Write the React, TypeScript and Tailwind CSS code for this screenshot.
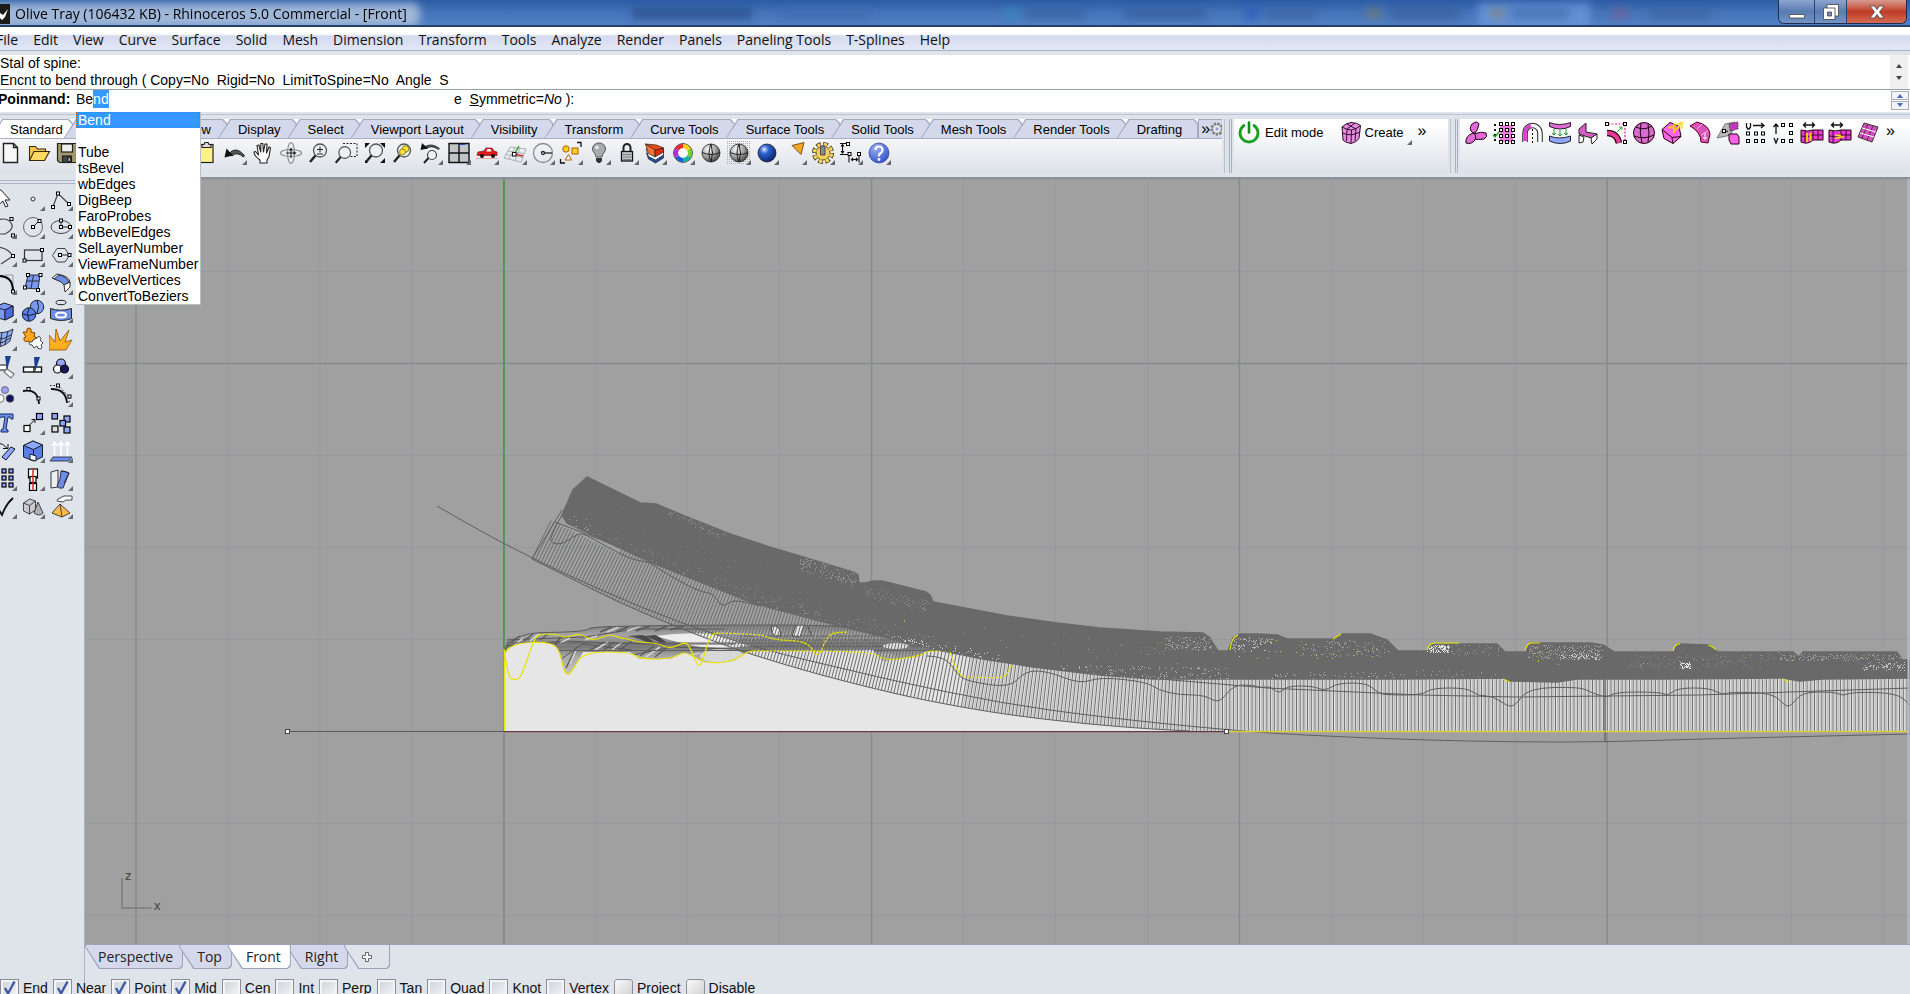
import { useEffect, useRef, useState } from "react";
import type { ReactNode } from "react";
import clsx from "clsx";

const SANS = "font-['Liberation_Sans',Arial,sans-serif]";
const UI = "font-['Open_Sans','Noto_Sans',sans-serif]";

type Tool = { label: string; art: ReactNode; flyout?: boolean };

/* ---------- small drawing helpers ---------- */

const Dot = ({ x, y }: { x: number; y: number }) => (
  <rect x={x - 1.5} y={y - 1.5} width="3" height="3" fill="#fff" stroke="#000" strokeWidth="1" />
);

const Lens = ({ children }: { children?: ReactNode }) => (
  <g fill="none" stroke="#222" strokeWidth="1.3">
    <circle cx="13" cy="9.5" r="6.5" fill="#eef0f3" stroke="#555" />
    <path d="M8.5 14.5L3 21" strokeWidth="2.4" />
    {children}
  </g>
);

const Ball = ({ fill, lines = true }: { fill: string; lines?: boolean }) => (
  <g>
    <circle cx="12" cy="12" r="9" fill={fill} stroke="#222" strokeWidth="0.8" />
    {lines && <path d="M3 11.5q9 4 18 0M12 3q-4 9 0 18M12 3q3 9 0 18" fill="none" stroke="#222" strokeWidth="1" />}
  </g>
);

const Squares = ({ list, fill = "#8fa8ff" }: { list: number[][]; fill?: string }) => (
  <g fill={fill} stroke="#000" strokeWidth="1.2">
    {list.map(([x, y, s], i) => (
      <rect key={i} x={x} y={y} width={s} height={s} />
    ))}
  </g>
);

/* ---------- main toolbar ---------- */

const mainTools: Tool[] = [
  { label: "New", art: <path d="M4.500 2.500h10l4 4v15h-14zM14.500 2.500v4h4" fill="#f8f8f8" stroke="#222" strokeWidth="1.4" /> },
  {
    label: "Open",
    art: (
      <g stroke="#3a2a00" strokeWidth="1.1">
        <path d="M2.500 19.500v-14h6l2 2.500h8v3" fill="#f3c64a" />
        <path d="M2.500 19.500l4.500-9h15.500l-5 9z" fill="#ffd964" />
      </g>
    ),
  },
  {
    label: "Save",
    art: (
      <g stroke="#222" strokeWidth="1.2">
        <path d="M2.500 2.500h19v19h-17l-2-2z" fill="#a29a6a" />
        <rect x="6.500" y="3" width="11" height="8" fill="#eee" />
        <rect x="7.500" y="15" width="9" height="6.500" fill="#444" />
        <rect x="13" y="16.500" width="2.500" height="4" fill="#ddd" />
      </g>
    ),
  },
  { label: "Print", art: <path d="M5 9V3h14v6M3 9h18v8H3zM6 15h12v6H6z" fill="#eee" stroke="#333" /> },
  { label: "Properties", art: <path d="M5 3h14v18H5zM8 8h8M8 12h8M8 16h5" fill="#fff" stroke="#333" /> },
  { label: "Cut", art: <path d="M8 3l6 13M16 3l-6 13M7 16a3 3 0 100 5 3 3 0 000-5M17 16a3 3 0 100 5 3 3 0 000-5" fill="none" stroke="#333" /> },
  { label: "Copy", art: <path d="M4 3h10v13H4zM9 8h11v13H9z" fill="#fff" stroke="#333" /> },
  {
    label: "Paste",
    art: (
      <g stroke="#222" strokeWidth="1.2">
        <rect x="3.500" y="3.500" width="14.500" height="18" fill="#fff08c" />
        <path d="M7 6.500V3.500h2l1-2h3l1 2h2v3z" fill="#ddd" />
      </g>
    ),
  },
  {
    label: "Undo",
    flyout: true,
    art: (
      <g>
        <path d="M6 12.500q7-8 15.500 2l-1 1.500q-7-6-11.500-1z" fill="#555" stroke="#222" />
        <path d="M1.500 16.500l2-9 6.500 7z" fill="#111" />
      </g>
    ),
  },
  {
    label: "Pan",
    art: (
      <path
        d="M9 22v-3q-6-4-6-8l1.500-.5 3 3.500L6 4.500l1.800-.5 2 7V2.500h2L12.500 11l1.500-8h2l-.5 9 2.500-6 1.500.7-1.500 9L16 19v3z"
        fill="#fff"
        stroke="#222"
        strokeWidth="1.1"
        strokeLinejoin="round"
      />
    ),
  },
  {
    label: "Rotate view",
    art: (
      <g fill="none" stroke="#8a8a8a" strokeWidth="1.1">
        <ellipse cx="12" cy="12" rx="10.500" ry="3.500" />
        <ellipse cx="12" cy="12" rx="3.500" ry="10.500" />
        <path d="M12 8v9M7 12h9" stroke="#222" />
        <path d="M10 9.500l2-3 2 3zM14.500 10l3 2-3 2z" fill="#222" stroke="none" />
      </g>
    ),
  },
  { label: "Zoom dynamic", art: <Lens><path d="M10 8.500h6M13 5.500v6M10 13h6" strokeWidth="1" /></Lens> },
  {
    label: "Zoom window",
    art: (
      <g>
        <path d="M8 2.500h14v13H12" fill="none" stroke="#222" strokeDasharray="2 1.500" />
        <g transform="translate(-2 3) scale(0.9)"><Lens /></g>
      </g>
    ),
  },
  {
    label: "Zoom extents",
    art: (
      <g>
        <Lens />
        <path d="M2 7V2h5zM17 2h5v5zM22 17v5h-5zM2 19v3h3z" fill="#111" />
      </g>
    ),
  },
  {
    label: "Zoom selected",
    art: (
      <g>
        <Lens />
        <circle cx="14.500" cy="8" r="3.300" fill="#ffe23a" stroke="#6b5a00" strokeWidth="0.7" />
        <circle cx="11.500" cy="11" r="3" fill="#ffe23a" stroke="#6b5a00" strokeWidth="0.7" />
      </g>
    ),
  },
  {
    label: "Undo view",
    flyout: true,
    art: (
      <g>
        <circle cx="13" cy="14" r="4.500" fill="#eef0f3" stroke="#444" strokeWidth="1.200" />
        <path d="M9.500 17L5 22" stroke="#222" strokeWidth="2" />
        <path d="M5 5.500q8-5 16 2l-1.500 1.500Q13 4 7 8z" fill="#444" />
        <path d="M1.500 9l1.500-7 6 5.500z" fill="#111" />
      </g>
    ),
  },
  {
    label: "Four viewports",
    flyout: true,
    art: (
      <g>
        <path d="M2 2.500h20v19H2zM12 2.500v19M2 12h20" fill="#c2c4c8" stroke="#111" strokeWidth="1.400" />
        <path d="M13 3.500h5" stroke="#2244cc" />
      </g>
    ),
  },
  {
    label: "Named views",
    flyout: true,
    art: (
      <g>
        <path d="M2 14l1-3 6-1 2-3h6l2 3 3 1v3.500H3z" fill="#e01a1a" stroke="#7a0000" strokeWidth="0.600" />
        <path d="M12.500 8h3l1 2.500h-5.500z" fill="#fff" />
        <circle cx="7" cy="15" r="2" fill="#111" />
        <circle cx="18" cy="15" r="2" fill="#111" />
        <path d="M1 17.500h22" stroke="#f2a5a5" />
      </g>
    ),
  },
  {
    label: "Construction plane",
    flyout: true,
    art: (
      <g fill="none" stroke="#a5a8ac" strokeWidth="0.9">
        <path d="M7 6l16 2-5 13L1 17zM12 6.500L6 18M17 7l-5 12.500M5 10l16 2.500M3 13.500l17 3" />
        <path d="M11 13l9 2" stroke="#d22" strokeWidth="1.3" />
        <path d="M12 12l4-7" stroke="#292" strokeWidth="1.3" />
        <rect x="9.500" y="11.500" width="3.500" height="3.500" fill="#fff" stroke="#000" />
      </g>
    ),
  },
  {
    label: "Object snap",
    flyout: true,
    art: (
      <g fill="none" stroke="#8a8d92" strokeWidth="1.300">
        <circle cx="12" cy="12" r="9.500" />
        <path d="M12 12h9" stroke="#222" />
        <circle cx="12" cy="12" r="1.500" fill="#fff" stroke="#222" />
      </g>
    ),
  },
  {
    label: "Select",
    flyout: true,
    art: (
      <g>
        <path d="M18 1.500h4V6M1.500 18v4h4.500" fill="none" stroke="#111" strokeWidth="1.300" />
        <circle cx="7" cy="8" r="3.200" fill="#ffd21f" stroke="#b35c00" />
        <rect x="13" y="7" width="6" height="6" fill="#ffd21f" stroke="#b35c00" />
        <path d="M9.500 13.500l3 5.500H6z" fill="#fff" stroke="#b35c00" />
      </g>
    ),
  },
  {
    label: "Hide",
    flyout: true,
    art: (
      <g>
        <path d="M12 2a6 6 0 00-6.500 6c0 3 3 4 3.500 8h6c.5-4 3.500-5 3.500-8A6 6 0 0012 2z" fill="#a9abb0" stroke="#55585d" />
        <path d="M9 17h6v3l-2 2h-2l-2-2z" fill="#333" />
        <circle cx="10" cy="6.500" r="1.700" fill="#eee" />
      </g>
    ),
  },
  {
    label: "Lock",
    flyout: true,
    art: (
      <g>
        <path d="M8.500 11V6.500a3.500 3.500 0 017 0V11" fill="none" stroke="#222" strokeWidth="2" />
        <rect x="6.500" y="10.500" width="11" height="9.500" fill="#c6c8cc" stroke="#111" strokeWidth="1.300" />
        <path d="M8 13.500h8M8 16h8M8 18.500h8" stroke="#777" />
      </g>
    ),
  },
  {
    label: "Layers",
    flyout: true,
    art: (
      <g stroke="#222" strokeWidth="0.700">
        <path d="M3.500 12l2 6 7 4 8-5v-6z" fill="#27499f" />
        <path d="M3 8l2.500 7.500 7 3.500 8-5V8z" fill="#fff" />
        <path d="M2.500 3l3 9.500 6.500 3.500V8z" fill="#ff7038" />
        <path d="M12 8l8.500-1v4L12 16z" fill="#d92b06" />
        <path d="M2.500 3l11 1 7 3-8.500 2z" fill="#f04a17" />
      </g>
    ),
  },
  {
    label: "Object colour",
    flyout: true,
    art: (
      <g fill="none" strokeWidth="4">
        <circle cx="12" cy="12" r="9.300" fill="#fff" stroke="#222" strokeWidth="1" />
        <path d="M12 5a7 7 0 016 3.500" stroke="#ffd400" />
        <path d="M18 8.500a7 7 0 010 7" stroke="#7bd12a" />
        <path d="M18 15.500A7 7 0 0112 19" stroke="#12b8a0" />
        <path d="M12 19a7 7 0 01-6-3.500" stroke="#1f5be0" />
        <path d="M6 15.500a7 7 0 010-7" stroke="#b52be0" />
        <path d="M6 8.500A7 7 0 0112 5" stroke="#f02a2a" />
      </g>
    ),
  },
  { label: "Shade", art: <Ball fill="url(#ballGray)" /> },
  {
    label: "Render preview",
    flyout: true,
    art: (
      <g>
        <rect x="0" y="0" width="24" height="24" fill="url(#dots)" />
        <Ball fill="url(#ballGray)" />
      </g>
    ),
  },
  { label: "Render", flyout: true, art: <Ball fill="url(#ballBlue)" lines={false} /> },
  {
    label: "Spotlight",
    flyout: true,
    art: <path d="M9 4.500L21 1.500l-3 12z" fill="#f5a623" stroke="#5a3800" strokeWidth="0.800" />,
  },
  {
    label: "Options",
    flyout: true,
    art: (
      <g>
        <circle cx="12" cy="12" r="8.300" fill="none" stroke="#3d3008" strokeWidth="5.500" strokeDasharray="4.300 2.220" />
        <circle cx="12" cy="12" r="8.300" fill="none" stroke="#f3cf63" strokeWidth="4" strokeDasharray="3 3.520" strokeDashoffset="-0.650" />
        <circle cx="12" cy="12" r="7" fill="#f3cf63" stroke="#3d3008" strokeWidth="0.800" />
        <circle cx="12" cy="12" r="8" fill="none" stroke="#f3cf63" strokeWidth="2.500" strokeDasharray="3 3.283" strokeDashoffset="-0.650" />
        <path d="M9.500 5h4.500v9H9.500z" fill="#8c8c8c" stroke="#333" strokeWidth="0.800" />
      </g>
    ),
  },
  {
    label: "Dimension",
    flyout: true,
    art: (
      <g fill="none" stroke="#111" strokeWidth="1.100">
        <path d="M1 2.500h7M3.500 4v7M2 5.500l1.500-2 1.500 2M2 10l1.500 2L5 10M1 13.500h9v8M20 14v7.500M12 18.500h7M14 17l-1.500 1.500L14 20M17 17l1.500 1.500L17 20" />
        <Dot x={9} y={3} />
        <Dot x={10.500} y={13} />
        <Dot x={20} y={13} />
      </g>
    ),
  },
  {
    label: "Help",
    flyout: true,
    art: (
      <g>
        <circle cx="12" cy="12" r="10" fill="url(#ballHelp)" stroke="#2a3f9a" strokeWidth="0.700" />
        <path d="M8.500 9q0-3.500 3.500-3.500T15.500 9q0 2-2 3.200T12 15.500" fill="none" stroke="#fff" strokeWidth="2.200" />
        <circle cx="12" cy="18.500" r="1.400" fill="#fff" />
      </g>
    ),
  },
];

/* ---------- left palette ---------- */

const sideTools: Tool[] = [
  { label: "Pointer", art: <path d="M8 3l9 10h-5l3 6-2.500 1-2.500-6-4 3.500V3z" fill="#fff" stroke="#222" /> },
  { label: "Point", flyout: true, art: <circle cx="12" cy="12" r="2" fill="#fff" stroke="#333" /> },
  {
    label: "Polyline",
    flyout: true,
    art: <g><path d="M4 19.500L9 6.500 20 17" fill="none" stroke="#444" strokeWidth="1.200" /><Dot x={4} y={20} /><Dot x={9} y={6.500} /><Dot x={20} y={17} /></g>,
  },
  {
    label: "Curve",
    flyout: true,
    art: <g><path d="M4 5Q14 2 18 8T12 19H4" fill="none" stroke="#444" strokeWidth="1.200" /><Dot x={18.500} y={4} /><Dot x={20} y={20.500} /></g>,
  },
  {
    label: "Circle",
    flyout: true,
    art: <g><circle cx="12" cy="12" r="9.500" fill="none" stroke="#666" /><path d="M12 12l6-6" stroke="#222" /><Dot x={12} y={12} /><Dot x={18.500} y={6} /></g>,
  },
  {
    label: "Ellipse",
    flyout: true,
    art: <g><ellipse cx="12" cy="12" rx="10" ry="6.500" fill="none" stroke="#444" /><path d="M12 12h9M12 12V6" stroke="#222" /><Dot x={12} y={12} /><Dot x={12} y={5.500} /><Dot x={21} y={12} /></g>,
  },
  {
    label: "Arc",
    flyout: true,
    art: <g><path d="M4 4q11 1 16 9L8 21" fill="none" stroke="#444" strokeWidth="1.200" /><Dot x={20} y={13} /></g>,
  },
  {
    label: "Rectangle",
    flyout: true,
    art: <g><rect x="3.500" y="7" width="17.500" height="10.500" fill="none" stroke="#333" strokeWidth="1.200" /><Dot x={3.500} y={17.500} /><Dot x={21} y={7} /></g>,
  },
  {
    label: "Polygon",
    flyout: true,
    art: <g><path d="M3.500 12.500L8 5.500h8l4.500 7-4.500 6.500H8z" fill="none" stroke="#444" /><path d="M12 12h8" stroke="#222" /><Dot x={11} y={12} /><Dot x={20.500} y={12} /></g>,
  },
  {
    label: "Fillet curves",
    flyout: true,
    art: <g><path d="M12 4h8v8" fill="none" stroke="#999" /><path d="M4 5q16-1 16 15" fill="none" stroke="#000" strokeWidth="2" /><Dot x={20} y={20.500} /></g>,
  },
  {
    label: "Surface from points",
    flyout: true,
    art: <g><path d="M7 4h12l-2 14-13-1z" fill="#7d98f0" stroke="#234" /><path d="M5.500 10h12.500M12.500 4L10 17.500" stroke="#234" /><Dot x={7} y={4} /><Dot x={19.500} y={4} /><Dot x={4} y={16.500} /><Dot x={17} y={19} /></g>,
  },
  {
    label: "Sweep",
    flyout: true,
    art: <g stroke="#333" strokeWidth="1"><path d="M3 7l5-4q13 2 13 9l-4 7q0-8-14-12z" fill="#eee" /><path d="M5 8l5-4q8 2 10 7l-5 3q-2-4-10-6z" fill="#6d8de8" /><path d="M15 14l6-3v5l-5 5z" fill="#fff" /></g>,
  },
  {
    label: "Box",
    flyout: true,
    art: <g stroke="#223" strokeWidth="1"><path d="M2 8l9-4 9 3v10l-8 4-10-3z" fill="#7d98f0" /><path d="M2 8l10 3 8-4M12 11v10" fill="none" /><path d="M12 11l8-4v10l-8 4z" fill="#4a6ae0" /></g>,
  },
  {
    label: "Boolean union",
    flyout: true,
    art: <g stroke="#123" strokeWidth="1"><circle cx="16" cy="8" r="6.700" fill="#7d98f0" /><circle cx="8" cy="15.500" r="6.700" fill="#5b7de8" /><path d="M8 9q-3 6 0 13M2 15q6 3 12 0M16 1.500q3 6 0 13" fill="none" /></g>,
  },
  {
    label: "Project",
    flyout: true,
    art: <g stroke="#222" strokeWidth="1"><ellipse cx="12" cy="3.500" rx="5" ry="2.200" fill="none" /><path d="M1.500 9.500q10 3.500 21 0v10q-10 4-21 0z" fill="#6d8de8" /><ellipse cx="12" cy="16" rx="5" ry="2.500" fill="none" stroke="#fff" strokeWidth="2" /></g>,
  },
  {
    label: "Mesh",
    flyout: true,
    art: <g stroke="#223" strokeWidth="0.900"><path d="M3 5q9 2 17-3l-3 12q-6 6-17 7z" fill="#8fb0f0" /><path d="M3 12q8 1 15-4M3 17q8-1 14-6M9 5L7 20M15 4l-3 14" fill="none" /></g>,
  },
  {
    label: "Plugins",
    art: <g strokeWidth="1"><path d="M2 5h4q-1-4 2-4t2 4l4 1-1 4q4 0 3 3t-4 1l-1 2-4-2q-3 2-4-1t2-3z" fill="#ffa51f" stroke="#7a4700" /><path d="M12 13l4-2q1-3 3-1t0 3l3 3-2 2q2 4-1 4t-3-3l-3 2-2-3q-3 0-3-2t3-1z" fill="#fff" stroke="#444" /></g>,
  },
  { label: "Explode", art: <path d="M0 23V8l6 7 1-13 4 12L20 3l-4 12 7-2-6 10z" fill="#ffae22" stroke="#8a5200" strokeWidth="0.800" /> },
  {
    label: "Trim",
    art: <g stroke="#111" strokeWidth="1.200"><path d="M2 10h12v5H2z" fill="#fff" /><path d="M14 14l7 5-3 4-7-6z" fill="#fff" stroke="#777" /><path d="M12 1h6l-4 14z" fill="#1c3f94" stroke="none" /></g>,
  },
  {
    label: "Split",
    art: <g stroke="#111" strokeWidth="1.400"><rect x="2.500" y="12" width="18" height="5" fill="#fff" /><path d="M13 2h6l-5 15z" fill="#1c3f94" stroke="none" /><path d="M13 12v5" /></g>,
  },
  {
    label: "Join",
    flyout: true,
    art: <g stroke="#111" strokeWidth="1.200"><circle cx="12" cy="8.500" r="4.500" fill="#9aa2ff" /><circle cx="8.500" cy="14" r="4" fill="#fff" /><circle cx="15.500" cy="14" r="4" fill="#15155e" /></g>,
  },
  {
    label: "Group",
    art: <g stroke="#555" strokeWidth="0.800"><circle cx="12" cy="7" r="3.500" fill="#9aa2ff" /><circle cx="7" cy="15.500" r="4" fill="#fff" /><circle cx="17" cy="15.500" r="3.800" fill="#15155e" /></g>,
  },
  {
    label: "Edit points",
    art: <g><path d="M2 8q15-3 16 13" fill="none" stroke="#111" strokeWidth="1.800" /><Dot x={7.500} y={6} /><Dot x={17.500} y={15.500} /></g>,
  },
  {
    label: "Control points",
    flyout: true,
    art: <g><path d="M2 6q15 0 16 14" fill="none" stroke="#111" strokeWidth="1.800" /><path d="M1 2.500h8l11 11v8" fill="none" stroke="#111" strokeDasharray="1.500 2" /><Dot x={9} y={2.500} /><Dot x={20.500} y={13.500} /></g>,
  },
  { label: "Text", art: <path d="M5 3h15v5h-2l-1-2h-2l-2 12 2 1v2H8v-2l2-1 2-12H8L6 8z" fill="#6d8de8" stroke="#112a6a" /> },
  {
    label: "Move",
    flyout: true,
    art: <g><Squares list={[[15.500, 2.500, 6]]} /><Squares list={[[3, 14.500, 6]]} fill="#fff" /><path d="M8.500 14l5-5M14 12V8.500h-3.500" fill="none" stroke="#111" /></g>,
  },
  {
    label: "Copy objects",
    art: <g><Squares list={[[3, 2.500, 5.500], [15, 5, 6], [11, 9.500, 5.500], [15, 16, 6]]} /><Squares list={[[3, 15, 6]]} fill="#ddd" /></g>,
  },
  {
    label: "Rotate",
    art: <g><path d="M9 18l9-10 4 2-9 11z" fill="#8fa8ff" stroke="#112" /><path d="M4 4q6 0 10 5M15 5v4.500h-5" fill="none" stroke="#111" /></g>,
  },
  {
    label: "Solid edit",
    flyout: true,
    art: <g stroke="#122" strokeWidth="1"><path d="M2.500 6.500L12 2l9.500 4v12l-9 4-10-4z" fill="#5b7de8" /><path d="M2.500 6.500l10 4 9-4.500L12 2z" fill="#8fa8ff" /><path d="M12.500 10.500V22" /><path d="M9 15l6 2v5l-6-1.500z" fill="#fff" /></g>,
  },
  {
    label: "Project to plane",
    flyout: true,
    art: <g><path d="M4 18h19l-3 4H1z" fill="#6d8de8" stroke="#223" strokeWidth="0.800" /><path d="M5.500 17V4M12 17V4M18.500 17V4M3 6.500L5.500 3 8 6.500M9.500 6.500L12 3l2.500 3.500M16 6.500L18.500 3 21 6.500" stroke="#fff" strokeWidth="1.500" fill="none" /></g>,
  },
  { label: "Array", flyout: true, art: <Squares list={[[9, 2, 4], [16, 2, 4], [9, 9, 4], [16, 9, 4], [9, 16, 4], [16, 16, 4]]} /> },
  {
    label: "Align",
    flyout: true,
    art: <g><Squares list={[[7.500, 2, 9], [9, 9.500, 6], [8.500, 16.500, 7]]} fill="#fff" /><path d="M12 1v22" stroke="#d22" strokeWidth="1.500" /></g>,
  },
  {
    label: "Bend",
    flyout: true,
    art: <g stroke="#223" strokeWidth="0.900"><path d="M2 5l7-2v17l-7 1z" fill="#eee" /><path d="M12 4q4 0 8 2-3 8-6 15-4 1-6-2 4-7 4-15z" fill="#6d8de8" /><path d="M12 4q4 0 8 2-3 6-5 10" fill="none" /></g>,
  },
  { label: "Check", flyout: true, art: <path d="M6 15l3 5Q13 9 20 3" fill="none" stroke="#111" strokeWidth="1.800" /> },
  {
    label: "Primitives",
    flyout: true,
    art: <g stroke="#333" strokeWidth="0.900"><path d="M2.500 8l6-4 6 2v9l-6 4-6-3z" fill="#c9cbd0" /><path d="M2.500 8l6 2.500 6-4.500M8.500 10.500V19" fill="none" /><path d="M17 7l5 11q-4 4-9 0z" fill="#aeb0b6" /></g>,
  },
  {
    label: "Visibility",
    flyout: true,
    art: <g stroke="#333" strokeWidth="0.900"><path d="M11 9l10 9-8 4-10-4z" fill="#ffb84a" /><path d="M11 9l2 13" /><path d="M9 4l6-3h8v4h-6l-3 2-6-1z" fill="#fff" /></g>,
  },
];

/* ---------- T-Splines toolbar ---------- */

const PINK = "#e26ad6";

const splineTools: Tool[] = [
  {
    label: "Pipe",
    art: <g fill={PINK} stroke="#201" strokeWidth="1"><path d="M9 12q-5-4-1-9 5-4 7 0-1 6-4 9z" /><path d="M10 13q7-3 12-1 2 4-2 6-6 1-10 0z" /><path d="M9 12q4 2 2 7-4 5-9 3-1-7 7-10z" /></g>,
  },
  {
    label: "Control grid",
    art: (
      <g>
        <rect x="8" y="4" width="13" height="17" fill="#f07ae0" />
        <path d="M3 3v18" stroke="#111" strokeDasharray="2 3" strokeWidth="2" />
        <path d="M1 14l2 2 4-5" stroke="#2a2" fill="none" strokeWidth="1.500" />
        {[3, 9, 15, 21].map((y) => [9, 15, 21].map((x) => <Dot key={`${x}-${y}`} x={x} y={y} />))}
      </g>
    ),
  },
  {
    label: "Bridge",
    art: <g fill="none"><path d="M5 21V12a7.500 7.500 0 0115 0v9" stroke="#222" strokeWidth="5.500" /><path d="M5 21V12a7.500 7.500 0 0115 0v9" stroke="#fff" strokeWidth="3.500" /><path d="M5 20V12a7.500 7.500 0 016-7" stroke="#e03ad0" strokeWidth="3.500" /><path d="M12.500 8v14" stroke="#111" strokeDasharray="2 2" /></g>,
  },
  {
    label: "Match",
    art: <g strokeWidth="1"><path d="M1.500 1.500q10 4 21 0v4q-10 5-21 0z" fill={PINK} stroke="#222" /><path d="M1.500 15q10 4 21 0v5q-10 5-21 0z" fill="#8fa8ff" stroke="#222" /><path d="M6 8v6M12 9v6M18 8v6M4 12l2 2 2-2M10 13l2 2 2-2M16 12l2 2 2-2" stroke="#1a9a2a" fill="none" /></g>,
  },
  {
    label: "Crease",
    art: <g stroke="#222" strokeWidth="1"><path d="M3 8l7-6v9l11 2-6 4-12-4z" fill="#d85cc6" /><path d="M15 17l6-4v5l-5 5zM3 14l5 2-1 5-4 1z" fill="#fff" /></g>,
  },
  {
    label: "Insert edge",
    art: <g><path d="M3 12q10 0 12 10" fill="none" stroke="#301" strokeWidth="6.500" /><path d="M3 12q10 0 12 10" fill="none" stroke="#e83a9a" strokeWidth="4" /><path d="M4 3h17v17" fill="none" stroke="#c2a" strokeDasharray="2 1.500" strokeWidth="1.200" /><path d="M13 11l5-5M18 9V6h-3" stroke="#2a2" fill="none" /><Dot x={3} y={3} /><Dot x={21} y={3} /><Dot x={21} y={21} /></g>,
  },
  {
    label: "Smooth",
    art: <g stroke="#201"><circle cx="12" cy="12" r="10.500" fill="#d96bd0" /><path d="M4 6q8 4 16-1M2 15q10 4 20-1M9 2q-2 10 1 20M16 3q2 9 0 18" fill="none" /></g>,
  },
  {
    label: "Box mode",
    art: <g stroke="#201" strokeWidth="1"><path d="M10 1.500l9 4 2 10-8 7-9-5-2-9z" fill="#ff62e6" /><path d="M2 8.500l10 8 9-1M12 16.500l1 6" fill="none" /><path d="M8 7h14V1.500zM14 2v10M21 3l-8 9" fill="none" stroke="#f5d800" strokeWidth="1.200" /></g>,
  },
  {
    label: "Extrude",
    art: <g stroke="#502" strokeWidth="1"><path d="M2 5l7-4q12 3 13 12l-2 9-7-1q0-10-11-16z" fill="#dd52b8" /><path d="M9 8l5-5M13 14l7-4" stroke="#f7b9e6" /><path d="M17 12v6M15 16l2 2.500 2-2.500" stroke="#fff" fill="none" /></g>,
  },
  {
    label: "Append face",
    art: <g><path d="M1 17L9 3l10-2-4 13z" fill="#b9b9bd" stroke="#777" /><path d="M13 3l9-2v7l-8 2z" fill="#c03ab8" stroke="#444" strokeDasharray="1.500 1" /><path d="M13 13h8l2 3v7h-8l-2-4z" fill="#ff62e6" stroke="#201" /><path d="M6 12l6-2" stroke="#111" /><Dot x={8} y={10} /></g>,
  },
  {
    label: "Straighten U",
    art: <g><path d="M2.500 2v4l1.500 2h1l1.500-2V2M9 4.500h11M17 2l3 2.500L17 7" fill="none" stroke="#111" strokeWidth="1.300" /><Dot x={4} y={12.500} /><Dot x={12} y={12.500} /><Dot x={19} y={12.500} /><Dot x={4} y={20} /><Dot x={12} y={20} /><Dot x={19} y={20} /></g>,
  },
  {
    label: "Straighten V",
    art: <g><path d="M4 13V3M1.500 6L4 3l2.500 3M2 17l2 5 2-5" fill="none" stroke="#111" strokeWidth="1.300" /><Dot x={11} y={4} /><Dot x={19} y={4} /><Dot x={19} y={12} /><Dot x={11} y={20} /><Dot x={19} y={20} /></g>,
  },
  ...["Insert loop", "Slide loop"].map((label, i) => ({
    label,
    art: (
      <g>
        <path d="M4 4h10M6 1.500L3.500 4 6 6.500M12 1.500L14.500 4 12 6.500" fill="none" stroke="#111" strokeWidth="1.300" />
        <path d="M1 9q7 2 12 0h10v10H13q-5 5-12 2z" fill="#e83ad0" stroke="#201" />
        <path d="M5 10v12M13 9v10M18 9v10M1 15q7 2 12-1h10" fill="none" stroke="#201" strokeWidth="0.800" />
        {i === 0 ? <path d="M7 12v9M10.500 12v8" stroke="#f5e000" strokeWidth="1.800" /> : <path d="M7 17.500l9-2M7 14.500h6" stroke="#f5e000" strokeWidth="1.500" />}
      </g>
    ),
  })),
  {
    label: "Convert",
    art: <g><path d="M8 2l14 4-6 15L2 16z" fill="#d44fc4" stroke="#433" /><path d="M12 3l-6 14M17 5l-6 14" stroke="#433" /><path d="M6 7l14 4M4 12l14 4" stroke="#fff" /></g>,
  },
];

const Flyout = () => (
  <svg viewBox="0 0 5 5" className="absolute bottom-0.5 right-0.5 size-[5px]" aria-hidden="true">
    <path d="M5 0v5H0z" fill="#666a70" />
  </svg>
);

const ToolButton = ({ tool }: { tool: Tool }) => (
  <button type="button" aria-label={tool.label} className="relative flex size-7 shrink-0 items-center justify-center">
    <svg viewBox="0 0 24 24" className="size-6" aria-hidden="true">
      {tool.art}
    </svg>
    {tool.flyout && <Flyout />}
  </button>
);

/* ---------- title and menu ---------- */

const glassTabs = [
  { x: 632, w: 120, c: "#1f3f78" },
  { x: 780, w: 90, c: "#3c67ad" },
  { x: 1003, w: 16, c: "#2b8fc0" },
  { x: 1025, w: 60, c: "#34609f" },
  { x: 1125, w: 80, c: "#2c5594" },
  { x: 1245, w: 14, c: "#1c4fc0" },
  { x: 1265, w: 50, c: "#35609f" },
  { x: 1367, w: 14, c: "#7d7a63" },
  { x: 1390, w: 70, c: "#31598f" },
  { x: 1490, w: 14, c: "#87865a" },
  { x: 1510, w: 60, c: "#3b66a8" },
  { x: 1612, w: 16, c: "#7d5a8e" },
  { x: 1650, w: 60, c: "#35609f" },
];

const TitleBar = () => (
  <header className="relative flex h-[27px] shrink-0 items-start overflow-hidden border-b-2 border-[#27406b] bg-linear-to-b from-[#2d5ca6] via-[#4573b8] to-[#5280c4]">
    <svg className="absolute inset-0 h-full w-full" aria-hidden="true">
      <defs>
        <filter id="soft" x="-30%" y="-100%" width="160%" height="300%">
          <feGaussianBlur stdDeviation="4" />
        </filter>
      </defs>
      <g filter="url(#soft)">
        <rect x="-20" y="3" width="440" height="24" rx="8" fill="#a9bfdb" opacity="0.9" />
        <rect x="1478" y="3" width="112" height="26" fill="#6d9ade" opacity="0.7" />
        {glassTabs.map((t) => (
          <rect key={t.x} x={t.x} y="8" width={t.w} height="11" fill={t.c} opacity="0.6" />
        ))}
      </g>
    </svg>
    <div className="relative flex flex-1 items-center gap-[5px]">
      <svg viewBox="0 0 10 20" className="h-5 w-2.5" aria-hidden="true">
        <path d="M0 0h10v20H0z" fill="#1b1b1b" />
        <path d="M0 9l3 2 5-6-3 8-3 3-2-2z" fill="#fff" />
      </svg>
      <h1 className={clsx(UI, "text-[14px] leading-[27px] text-black")}>
        Olive Tray (106432 KB) - Rhinoceros 5.0 Commercial - [Front]
      </h1>
    </div>
    <div className="relative mr-[3px] flex h-6 overflow-hidden rounded-b-md border border-t-0 border-[#1c2f52]">
      <button type="button" aria-label="Minimize" className="flex w-9 items-center justify-center border-r border-[#29426f] bg-linear-to-b from-[#8ba6cf] via-[#5a7cb0] to-[#7394c4]">
        <svg viewBox="0 0 20 20" className="size-5"><path d="M2.500 12.500h15v3.500h-15z" fill="#fff" stroke="#444" strokeWidth="0.800" /></svg>
      </button>
      <button type="button" aria-label="Restore" className="flex w-8 items-center justify-center border-r border-[#29426f] bg-linear-to-b from-[#8ba6cf] via-[#5a7cb0] to-[#7394c4]">
        <svg viewBox="0 0 20 20" className="size-5">
          <path d="M6 2.500h11.500v11.500h-3.500v3.500H2.500V6H6z" fill="#fff" stroke="#444" strokeWidth="0.800" />
          <path d="M6.500 10h4v4h-4z" fill="#6d8cbd" stroke="#444" strokeWidth="0.800" />
          <path d="M6 6h8v8" fill="none" stroke="#444" strokeWidth="0.800" />
        </svg>
      </button>
      <button type="button" aria-label="Close" className="flex w-[59px] items-center justify-center bg-linear-to-b from-[#d79a8f] via-[#bf3a24] to-[#d46b52]">
        <svg viewBox="0 0 20 20" className="size-5"><path d="M3 4h4.500L10 7.500 12.500 4H17l-4.500 6 4.500 6h-4.500L10 12.500 7.500 16H3l4.500-6z" fill="#fff" stroke="#444" strokeWidth="0.800" /></svg>
      </button>
    </div>
  </header>
);

const menus = [
  "File", "Edit", "View", "Curve", "Surface", "Solid", "Mesh", "Dimension", "Transform",
  "Tools", "Analyze", "Render", "Panels", "Paneling Tools", "T-Splines", "Help",
];

const MenuBar = () => (
  <nav className={clsx(UI, "flex h-6 shrink-0 gap-[15px] border-b border-[#a9b1c5] bg-linear-to-b from-white from-30% via-[#d5dbee] via-40% to-[#e2e7f6] text-[14px] leading-[26px] text-[#111]")}>
    {menus.map((m) => (
      <button key={m} type="button" className="first:-ml-1">{m}</button>
    ))}
  </nav>
);

/* ---------- command area ---------- */

const suggestions = [
  "Bend", "", "Tube", "tsBevel", "wbEdges", "DigBeep", "FaroProbes", "wbBevelEdges",
  "SelLayerNumber", "ViewFrameNumber", "wbBevelVertices", "ConvertToBeziers",
];

const Arrow = ({ up, blue }: { up?: boolean; blue?: boolean }) => (
  <svg viewBox="0 0 8 5" className="h-[5px] w-2" aria-hidden="true">
    <path d={up ? "M1 5l3-4 3 4z" : "M1 0l3 4 3-4z"} fill={blue ? "#4a66c4" : "#444"} />
  </svg>
);

const CommandArea = () => {
  const prompt = useRef<HTMLInputElement>(null);

  useEffect(() => {
    prompt.current?.focus();
    prompt.current?.setSelectionRange(2, 4);
  }, []);

  return (
    <section className={clsx(SANS, "mt-1 shrink-0 bg-white text-[14px] text-black")}>
      <div className="flex h-[35px] border-b border-[#9aa0a8]">
        <div className="w-[454px] overflow-hidden whitespace-pre leading-[17px]">
          <p>Stal of spine:</p>
          <p>{"Encnt to bend through ( Copy=No  Rigid=No  LimitToSpine=No  Angle  S"}</p>
        </div>
        <div className="ml-auto mr-0.5 flex w-[18px] flex-col items-center justify-around bg-[#f0f0f0] py-1">
          <button type="button" aria-label="Scroll up"><Arrow up /></button>
          <button type="button" aria-label="Scroll down"><Arrow /></button>
        </div>
      </div>
      <div className="relative flex h-[22px] items-start leading-[18px]">
        <label htmlFor="command" className="-ml-0.5 w-[78px] font-bold">Poinmand:</label>
        <input
          id="command"
          ref={prompt}
          defaultValue="Bend"
          className="h-[18px] w-[378px] bg-transparent caret-transparent outline-none selection:bg-[#3399ff] selection:text-white"
        />
        <p className="whitespace-pre">e  <u>S</u>ymmetric=<i>No</i> ):</p>
        <div className="ml-auto mr-px flex flex-col gap-px pt-px">
          <button type="button" aria-label="Previous command" className="flex h-[9px] w-[18px] items-center justify-center border border-[#a8adb8] bg-[#f2f3f6]"><Arrow up blue /></button>
          <button type="button" aria-label="Next command" className="flex h-[9px] w-[18px] items-center justify-center border border-[#a8adb8] bg-[#f2f3f6]"><Arrow blue /></button>
        </div>
        <ul role="listbox" aria-label="Matching commands" className="absolute left-[76px] top-[22px] z-20 w-[125px] border-b border-r border-[#b9bdc6] bg-white leading-4">
          {suggestions.map((s, i) => (
            <li
              key={i}
              role="option"
              aria-selected={i === 0}
              className={clsx("h-4 pl-0.5", i === 0 && "outline-dotted -outline-offset-1 outline-1 outline-[#c46a1c] bg-[#3399ff] text-white")}
            >
              {s}
            </li>
          ))}
        </ul>
      </div>
    </section>
  );
};

/* ---------- toolbars ---------- */

const toolTabs = [
  "Standard", "CPlanes", "Set View", "Display", "Select", "Viewport Layout", "Visibility", "Transform",
  "Curve Tools", "Surface Tools", "Solid Tools", "Mesh Tools", "Render Tools", "Drafting",
];

const tabShape = "[clip-path:polygon(12px_0,calc(100%-4px)_0,100%_4px,100%_100%,0_100%)]";

const ToolTabs = ({ active, onPick }: { active: string; onPick: (t: string) => void }) => (
  <div className={clsx(SANS, "flex h-5 border-b border-[#a9afc0] text-[13px] leading-[21px] text-black")}>
    {toolTabs.map((t) => (
      <button
        key={t}
        type="button"
        onClick={() => onPick(t)}
        className={clsx(tabShape, "relative -ml-[9px] shrink-0 bg-[#a3abc2] pl-[20px] pr-4 first:-ml-[10px] first:pr-2.5")}
      >
        <span className={clsx(tabShape, "absolute inset-x-px bottom-0 top-px", t === active ? "bg-white" : "bg-[#d3d9ea]")} />
        <span className="relative">{t}</span>
      </button>
    ))}
    <div className="flex flex-1 items-center justify-between border-l border-t border-[#a3abc2] bg-[#d3d9ea] pl-0.5">
      <button type="button" aria-label="More tabs" className="text-[16px] leading-4">»</button>
      <button type="button" aria-label="Tab options">
        <svg viewBox="0 0 16 16" className="size-[14px]" aria-hidden="true">
          <circle cx="8" cy="8" r="6" fill="#dcdee2" stroke="#777" strokeWidth="3" strokeDasharray="2.500 1.500" />
          <circle cx="8" cy="8" r="5" fill="#e3e4e8" stroke="#888" />
          <circle cx="8" cy="8" r="1.700" fill="#8fa0d0" />
        </svg>
      </button>
    </div>
  </div>
);

const panel = "bg-linear-to-b from-white from-10% to-[#dde1e8]";

const Grip = () => (
  <div className="ml-0.5 mr-0.5 flex gap-px border-l border-[#b9bfcc] pl-1">
    <i className="w-px bg-[#aab1c4]" />
    <i className="w-px bg-[#aab1c4]" />
  </div>
);

const Toolbars = () => {
  const [tab, setTab] = useState("Standard");

  return (
    <section className="flex h-[54px] shrink-0">
      <div className={clsx(panel, "w-[1222px] shrink-0 overflow-hidden")}>
        <ToolTabs active={tab} onPick={setTab} />
        <div className="-ml-[3px] flex">
          {mainTools.map((t) => <ToolButton key={t.label} tool={t} />)}
        </div>
      </div>
      <Grip />
      <div className={clsx(panel, SANS, "flex w-[214px] shrink-0 items-start text-[13px] leading-7")}>
        <button type="button" className="flex items-center gap-1 pl-[3px] pr-[15px]">
          <svg viewBox="0 0 24 24" className="size-6" aria-hidden="true">
            <path d="M7 4.500a9 9 0 1010 0" fill="none" stroke="#17a022" strokeWidth="2.800" strokeLinecap="round" />
            <path d="M12 1.500v10" stroke="#138a1c" strokeWidth="2.600" strokeLinecap="round" />
          </svg>
          Edit mode
        </button>
        <button type="button" className="relative flex items-center gap-0.5 pr-2.5">
          <svg viewBox="0 0 24 24" className="size-6" aria-hidden="true">
            <path d="M3 6q4-4 9-4.500 6 0 9.500 3l-1.500 13q-3 4-8 5-6-1-8-3.500z" fill="#e58be0" stroke="#301030" />
            <path d="M3 6q5 3 9.500 3 5-1 9-4.500M12.500 9L12 22M8 3l8 4.500M16 2L8 8l-.5 12M3.500 12q8 4 17.500-1M17 7l-1 13" fill="none" stroke="#301030" />
          </svg>
          Create
          <Flyout />
        </button>
        <button type="button" aria-label="More" className="pl-1 text-[16px] leading-6">»</button>
      </div>
      <Grip />
      <div className={clsx(panel, SANS, "flex flex-1 items-start pl-0.5")}>
        {splineTools.map((t) => <ToolButton key={t.label} tool={t} />)}
        <button type="button" aria-label="More" className="pl-1 text-[16px] leading-6">»</button>
      </div>
    </section>
  );
};

const Palette = () => (
  <aside className="w-[85px] shrink-0 overflow-hidden border-r border-[#aab2c6] pt-[3px]">
    <div className="mb-px h-1 w-[75px] border-y border-[#aab2c6]" />
    <div className="-ml-[9px] grid w-[84px] grid-cols-3">
      {sideTools.map((t) => <ToolButton key={t.label} tool={t} />)}
    </div>
  </aside>
);

/* ---------- viewport geometry ---------- */

type P = [number, number];

const gridX = Array.from({ length: 40 }, (_, i) => 136 + i * 91.95);
const gridY = Array.from({ length: 12 }, (_, i) => 179.500 + i * 92);

const bandTop: P[] = [
  [562, 515], [573, 490], [587, 477], [640, 503], [656, 504], [687, 517], [730, 534], [773, 548], [803, 557],
  [853, 572], [858, 575], [859, 583], [865, 583], [873, 581], [882, 581], [926, 592], [930, 595], [933, 602], [970, 609],
  [1007, 616], [1057, 623], [1100, 628], [1160, 632], [1203, 633], [1209, 637], [1218, 651], [1228, 651],
  [1233, 638], [1240, 634], [1257, 634], [1277, 635], [1287, 639], [1333, 639], [1342, 634], [1370, 634],
  [1387, 640], [1398, 651], [1427, 651], [1432, 644], [1497, 644], [1505, 652], [1525, 652], [1530, 643],
  [1590, 643], [1603, 645], [1614, 652], [1673, 652], [1677, 644], [1710, 645], [1718, 652], [1780, 652],
  [1793, 652], [1799, 657], [1803, 652], [1897, 652], [1902, 660], [1910, 660],
];

const bandBottom: P[] = [
  [1910, 678], [1822, 679], [1800, 681], [1783, 678], [1667, 679], [1577, 679], [1557, 682], [1510, 681],
  [1503, 678], [1400, 679], [1200, 679], [1153, 679], [1100, 675], [1033, 667], [983, 659], [933, 649],
  [880, 636], [820, 621], [753, 603], [703, 583], [653, 563], [607, 542], [567, 523],
];

const base: P[] = [
  [532, 559], [570, 578], [620, 603], [670, 624], [710, 640], [753, 655], [820, 675], [900, 695], [960, 707],
  [1017, 716], [1087, 724], [1150, 729], [1190, 731], [1910, 731],
];

const spine: P[] = [
  [437, 506], [480, 531], [532, 558], [600, 590], [680, 623], [760, 649], [853, 671], [900, 682], [1000, 703],
  [1100, 717], [1227, 730], [1300, 735], [1420, 740], [1517, 742], [1605, 742], [1700, 739], [1910, 734],
];

const slabTop: P[] = [
  [505, 653], [508, 648], [520, 643], [543, 642], [555, 645], [560, 653], [564, 671], [568, 675], [573, 670],
  [583, 652], [630, 652], [640, 659], [670, 659], [682, 653], [687, 653], [703, 662], [717, 663], [733, 661],
  [747, 652], [753, 651], [873, 650], [883, 661], [920, 656], [927, 651], [940, 651],
];

const yellowBack: P[] = [
  [504, 649], [508, 676], [513, 680], [520, 679], [526, 663], [535, 637], [542, 634], [557, 634], [564, 638],
  [577, 634], [583, 635], [593, 641], [610, 634], [620, 638], [628, 639], [637, 642], [657, 643], [670, 649],
  [685, 642], [690, 647], [698, 667], [702, 663], [710, 635], [717, 633],
];

const yellowDashed: P[] = [
  [717, 633], [762, 634], [773, 640], [808, 641], [818, 660], [828, 633], [847, 632],
];

const yellowDip: P[] = [[950, 652], [958, 675], [967, 677], [1000, 678], [1007, 675], [1012, 664]];

const texture: P[] = [
  [504, 652], [509, 633], [583, 632], [592, 627], [633, 626], [713, 625], [850, 625], [930, 640], [940, 651],
];

const contour: P[] = [
  [927, 656], [945, 656], [958, 675], [967, 681], [1010, 688], [1025, 671], [1047, 671], [1080, 684], [1100, 677],
  [1147, 682], [1158, 690], [1180, 695], [1205, 695], [1219, 704], [1233, 685], [1253, 685], [1262, 688],
  [1270, 686], [1279, 694], [1287, 686], [1313, 686], [1325, 691], [1338, 683], [1367, 683], [1378, 693],
  [1387, 695], [1422, 695], [1432, 688], [1468, 688], [1478, 696], [1493, 696], [1507, 706], [1515, 706],
  [1528, 688], [1580, 687], [1590, 692], [1607, 698], [1615, 692], [1660, 692], [1668, 696], [1677, 688],
  [1710, 688], [1722, 695], [1730, 692], [1773, 693], [1785, 706], [1791, 706], [1802, 692], [1835, 692],
  [1843, 696], [1852, 692], [1897, 693], [1910, 705],
];

const contourLeft: P[] = [
  [562, 515], [549, 538], [553, 544], [563, 544], [577, 534], [585, 534], [607, 547], [633, 560], [650, 562],
  [663, 572], [700, 592], [713, 593], [722, 608], [733, 599], [760, 606],
];

const str = (pts: P[]) => pts.map((p) => p.join(",")).join(" ");

// rounded path through the midpoints of a polyline
const smooth = (pts: P[]) => {
  let d = `M${pts[0]}`;
  for (let i = 1; i < pts.length - 1; i++) {
    const [x, y] = pts[i];
    const [nx, ny] = pts[i + 1];
    d += `Q${x},${y} ${(x + nx) / 2},${(y + ny) / 2}`;
  }
  return `${d}L${pts[pts.length - 1]}`;
};

const pointAt = (pts: P[], dist: number): P => {
  let left = Math.max(0, dist);
  for (let i = 1; i < pts.length; i++) {
    const len = Math.hypot(pts[i][0] - pts[i - 1][0], pts[i][1] - pts[i - 1][1]);
    if (left <= len) {
      const k = left / len;
      return [pts[i - 1][0] + (pts[i][0] - pts[i - 1][0]) * k, pts[i - 1][1] + (pts[i][1] - pts[i - 1][1]) * k];
    }
    left -= len;
  }
  return pts[pts.length - 1];
};

// ribs stand square on the base curve
const ribs = () => {
  let dark = "";
  let pale = "";
  for (let s = 0; s < 1410; ) {
    const [x, y] = pointAt(base, s);
    const a = pointAt(base, s - 30);
    const b = pointAt(base, s + 30);
    const len = Math.hypot(b[0] - a[0], b[1] - a[1]);
    const reach = x < 600 ? 43 : 54;
    const nx = ((b[1] - a[1]) / len) * reach;
    const ny = (-(b[0] - a[0]) / len) * reach;
    dark += `M${x.toFixed(1)} ${y.toFixed(1)}l${nx.toFixed(1)} ${ny.toFixed(1)}`;
    if (x > 960) pale += `M${(x + 2).toFixed(1)} ${y.toFixed(1)}l${nx.toFixed(1)} ${ny.toFixed(1)}`;
    s += x > 900 ? 3.7 : 3.2;
  }
  return { dark, pale };
};

let seed = 7;
const rand = () => {
  seed = (seed * 16807) % 2147483647;
  return seed / 2147483647;
};

// x, y, width, height, slope, count, tone
const clusters: [number, number, number, number, number, number, string][] = [
  [565, 508, 30, 18, 0.5, 16, "#a2a2a2"],
  [580, 490, 240, 90, 0.38, 110, "#808080"],
  [600, 532, 250, 16, 0.36, 130, "#8c8c8c"],
  [665, 508, 60, 8, 0.4, 50, "#8f8f8f"],
  [800, 556, 56, 14, 0.3, 130, "#969696"],
  [865, 585, 65, 12, 0.25, 90, "#8a8a8a"],
  [800, 600, 150, 24, 0.25, 110, "#878787"],
  [890, 634, 110, 14, 0.18, 130, "#d0d0d0"],
  [1000, 630, 230, 20, 0.03, 40, "#858585"],
  [1165, 636, 46, 14, 0, 110, "#a5a5a5"],
  [1060, 664, 170, 12, 0.02, 130, "#b4b4b4"],
  [1232, 636, 40, 15, 0, 100, "#b4b4b4"],
  [1300, 640, 85, 16, 0, 120, "#a0a0a0"],
  [1270, 672, 130, 6, 0, 45, "#b4b4b4"],
  [1427, 645, 22, 7, 0, 110, "#dedede"],
  [1450, 645, 50, 10, 0, 40, "#949494"],
  [1528, 645, 75, 14, 0, 230, "#9d9d9d"],
  [1560, 653, 40, 6, 0, 60, "#cccccc"],
  [1625, 654, 150, 14, 0, 120, "#8a8a8a"],
  [1680, 662, 10, 6, 0, 50, "#e2e2e2"],
  [1780, 654, 120, 6, 0, 170, "#9d9d9d"],
  [1863, 662, 42, 8, 0, 90, "#bcbcbc"],
  [1400, 670, 100, 7, 0, 30, "#9a9a9a"],
  [1230, 636, 170, 22, 0, 22, "#d6d03a"],
  [880, 615, 340, 30, 0.08, 22, "#aeaa48"],
  [1527, 645, 380, 20, 0, 20, "#c9c43a"],
];

const specks = clusters.map(([x, y, w, h, slope, n, tone]) => {
  let d = "";
  for (let i = 0; i < n; i++) {
    const dx = rand() * w;
    d += `M${Math.round(x + dx)} ${Math.round(y + rand() * h + dx * slope)}h1v1h-1z`;
  }
  return { d, tone };
});

const { dark, pale } = ribs();

const Scene = () => (
  <svg className="h-full w-full" role="img" aria-label="Front view of the tray being bent along its spine">
    <defs>
      <linearGradient id="relief" x1="0" y1="0" x2="0" y2="1">
        <stop offset="0" stopColor="#6f6f6f" />
        <stop offset="0.250" stopColor="#a4a4a4" />
        <stop offset="0.450" stopColor="#777" />
        <stop offset="0.600" stopColor="#a8a8a8" />
        <stop offset="1" stopColor="#cfcfcf" />
      </linearGradient>
      <clipPath id="reliefClip">
        <polygon points={str([...texture, ...[...slabTop].reverse()])} />
      </clipPath>
      <clipPath id="bandClip">
        <polygon points={str([...bandTop, ...bandBottom])} />
      </clipPath>
    </defs>
    <g transform="translate(-85 -179)">
      {gridX.map((x, i) => i % 4 !== 0 && <path key={x} d={`M${x} 170V2000`} stroke="#9299a4" opacity="0.8" />)}
      {gridY.map((y, i) => i % 4 !== 2 && <path key={y} d={`M85 ${y}H4000`} stroke="#9299a4" opacity="0.8" />)}
      {gridX.map((x, i) => i % 4 === 0 && <path key={x} d={`M${x} 170V2000`} stroke="#878a8e" strokeWidth="1.500" />)}
      <path d="M85 363.500H4000" stroke="#878a8e" strokeWidth="1.500" />

      <path d="M504 170V650" stroke="#3d9a40" strokeWidth="1.500" />
      <path d="M287 731.500H505" stroke="#5c5c5c" />

      {/* tray before bending */}
      <polygon points={str([...slabTop, [1910, 670], [1910, 731], [504, 731]])} fill="#e6e6e6" />
      <g clipPath="url(#reliefClip)">
        <rect x="500" y="620" width="445" height="60" fill="url(#relief)" />
        <path d="M655 636q30-4 60-2l40 12q-50 4-70-2z" fill="#ededed" />
        <ellipse cx="722" cy="656" rx="22" ry="7" fill="#d8d8d8" />
        <path d="M505 640l80-3 50-8 90 0M505 646l60-5 70 3 100 0M560 660l22-16 50 6M632 655l40-8 60 2" stroke="#565656" fill="none" />
        <path
          d="M512 642l8-6M524 641l9-7M540 640l8-6M552 650l9-14M566 668l10-20M590 650l14-8M604 650l10-8M620 650l12-9M640 656l14-10M655 657l10-8M600 632l12-5M616 632l12-5M636 631l14-5M655 631l12-5M670 630l14-4"
          stroke="#5a5a5a"
          strokeWidth="1.400"
          fill="none"
        />
        <path d="M515 645l8-7M530 641l9-7M595 650l13-8M612 650l10-8M646 657l14-10M607 632l12-5M627 631l14-5M570 664l6-14M585 640l12-4M560 643l10-5M680 656l12 4M690 655l10-2" stroke="#d2d2d2" strokeWidth="1.600" fill="none" />
        <path d="M628 636q12 2 20 7l8 1q-8-8-14-9zM645 636q12 5 16 7h6q-8-7-12-8z" fill="#4a4a4a" />
        <path d="M772 626q-2 6 3 10h5q2-6-4-10zM792 636l4-11h8l-4 12zM808 627l4 9" fill="#e8e8e8" stroke="#444" />
        <path d="M504 643H945M504 650.500H945" stroke="#5f5f5f" />
        <path d="M740 636h200M740 640h200M740 646h200" stroke="#555" strokeDasharray="3 1" />
        <ellipse cx="896" cy="646" rx="13" ry="3" fill="#e2e2e2" />
        <ellipse cx="886" cy="657" rx="9" ry="4" fill="#b0b0b0" />
      </g>
      <path d={smooth([...texture])} stroke="#5a5a5a" fill="none" />

      {/* bent copy */}
      <path d={pale} stroke="#c2c2c2" strokeWidth="1.200" fill="none" />
      <path d={dark} stroke="#6c6c6c" strokeWidth="1" fill="none" />
      <g fill="none" stroke="#5f5f5f">
        <path d={smooth(base.slice(0, -1))} />
        <path d={smooth(spine)} />
        <path d={smooth(contour)} />
        <path d={smooth(contourLeft)} />
        <path d="M555 522L700 578 813 618M532 559L562 510" />
        <path d="M1160 679L1267 688 1420 695 1517 697 1700 695 1910 688" />
        <path d="M1605 679V742" strokeWidth="1.300" />
      </g>
      <polygon points={str([...bandTop, ...bandBottom])} fill="#696969" stroke="#696969" strokeLinejoin="round" strokeWidth="1.500" />
      <g clipPath="url(#bandClip)">
        {specks.map((s, i) => <path key={i} d={s.d} fill={s.tone} />)}
      </g>

      {/* selected edges */}
      <g fill="none" stroke="#e9e500" strokeWidth="1.200">
        <path d={smooth(slabTop.slice(0, 20))} />
        <path d={smooth(slabTop.slice(19))} strokeDasharray="3 1" />
        <path d={smooth(yellowBack)} />
        <path d={smooth(yellowDashed)} strokeDasharray="3 1" />
        <path d={smooth(yellowDip)} strokeDasharray="3 1" />
        <path d="M504.500 650V731" />
        <path d="M1230 650q1-12 8-15M1427 650q2-7 8-7h24M1525 651q2-9 8-8h7M1673 651q2-8 7-7M1708 645q6 2 8 5M1503 679l7 3M1783 679l6 3M1333 639l8-5" />
        <path d="M1227 731.500H1908" stroke="#d9cf3a" strokeWidth="1.500" />
      </g>
      <path d="M504 731.500H1226" stroke="#4f4547" />
      <path d="M504 732.500H1226" stroke="#a87f80" />
      <path d="M504 733V2000" stroke="#878a8e" strokeWidth="1.500" />
      <rect x="285.500" y="729.500" width="4" height="4" fill="#fff" stroke="#444" />
      <rect x="1224.500" y="729.500" width="4" height="4" fill="#fff" stroke="#444" />

      {/* axis icon */}
      <path d="M122 878V908H152" stroke="#7c7c7c" strokeWidth="1.500" fill="none" />
      <g className="font-['Liberation_Sans',Arial,sans-serif]" fontSize="13" fill="#444">
        <text x="125" y="880">z</text>
        <text x="154" y="910">x</text>
      </g>
      <path d="M1908.500 170V2000" stroke="#b4bccd" strokeWidth="2" />
    </g>
  </svg>
);

/* ---------- bottom bars ---------- */

const viewShape = "[clip-path:polygon(0_0,100%_0,100%_calc(100%-3px),calc(100%-3px)_100%,14px_100%,0_2px)]";
const views = ["Perspective", "Top", "Front", "Right"];

const ViewTabs = () => {
  const [view, setView] = useState("Front");

  return (
    <div className={clsx(UI, "flex h-[25px] shrink-0 border-t border-[#9aa3bb] text-[14px] leading-[22px] text-[#222]")}>
      {views.map((v) => (
        <button
          key={v}
          type="button"
          onClick={() => setView(v)}
          className={clsx(viewShape, "relative -ml-1 bg-[#9aa3bb] pl-[18px] pr-2.5 first:ml-0 first:pl-[13px]", v === view && "z-10")}
        >
          <span className={clsx(viewShape, "absolute inset-x-px bottom-px top-0", v === view ? "bg-white" : "bg-[#d3d9ea]")} />
          <span className="relative">{v}</span>
        </button>
      ))}
      <button type="button" aria-label="New viewport" className={clsx(viewShape, "relative -ml-1 flex w-[46px] items-center justify-center bg-[#9aa3bb]")}>
        <span className={clsx(viewShape, "absolute inset-x-px bottom-px top-0 bg-[#dfe3ea]")} />
        <svg viewBox="0 0 10 10" className="relative size-2.5" aria-hidden="true">
          <path d="M3.500 0.500h3v3h3v3h-3v3h-3v-3h-3v-3h3z" fill="#fff" stroke="#666" />
        </svg>
      </button>
    </div>
  );
};

const snaps = ["End", "Near", "Point", "Mid", "Cen", "Int", "Perp", "Tan", "Quad", "Knot", "Vertex", "Project", "Disable"];
const snapsOn = ["End", "Near", "Point", "Mid"];

const SnapBar = () => (
  <footer className={clsx(SANS, "mt-2 flex shrink-0 gap-[5px] text-[14px] leading-5 text-[#111]")}>
    {snaps.map((s, i) => (
      <label key={s} className="relative flex items-center gap-1">
        <input
          type="checkbox"
          defaultChecked={snapsOn.includes(s)}
          className={clsx(
            "peer size-[19px] appearance-none border border-[#8b8e94] bg-linear-to-br",
            i < 11
              ? "from-[#cdd2da] to-[#f5f6f8] shadow-[inset_0_0_0_2px_#f4f4f4]"
              : "rounded-[3px] from-[#fafafa] to-[#cfcfcf]",
          )}
        />
        <svg viewBox="0 0 14 16" className="absolute left-[3px] top-0.5 hidden h-4 w-3.5 peer-checked:block" aria-hidden="true">
          <path d="M2 8l3 5.500L11.500 1.500" fill="none" stroke="#3f5aa5" strokeWidth="2.400" />
        </svg>
        {s}
      </label>
    ))}
  </footer>
);

export default function App() {
  return (
    <div className="flex h-screen flex-col overflow-hidden bg-[#dfe3ea]">
      <svg className="absolute size-0" aria-hidden="true">
        <defs>
          <radialGradient id="ballGray" cx="0.35" cy="0.3" r="0.8">
            <stop offset="0" stopColor="#fff" />
            <stop offset="0.5" stopColor="#a5a5a5" />
            <stop offset="1" stopColor="#2e2e2e" />
          </radialGradient>
          <radialGradient id="ballBlue" cx="0.35" cy="0.3" r="0.8">
            <stop offset="0" stopColor="#dfeaff" />
            <stop offset="0.3" stopColor="#2f63d6" />
            <stop offset="1" stopColor="#041a5c" />
          </radialGradient>
          <radialGradient id="ballHelp" cx="0.35" cy="0.25" r="0.8">
            <stop offset="0" stopColor="#9db0f2" />
            <stop offset="1" stopColor="#3352c8" />
          </radialGradient>
          <pattern id="dots" width="2" height="2" patternUnits="userSpaceOnUse">
            <rect width="1" height="1" fill="#aaa" />
          </pattern>
        </defs>
      </svg>
      <TitleBar />
      <MenuBar />
      <CommandArea />
      <div className="mb-[4px] mt-0.5 h-px shrink-0 bg-[#bcc3d2]" />
      <Toolbars />
      <main className="mt-1 flex min-h-0 flex-1">
        <Palette />
        <div className="flex min-w-0 flex-1 flex-col">
          <div className="min-h-0 flex-1 overflow-hidden border-t-2 border-[#8d9197] bg-[#a0a0a0]">
            <Scene />
          </div>
          <ViewTabs />
          <div className="h-[25px] shrink-0" />
        </div>
      </main>
      <div className="-mt-6 h-6 shrink-0">
        <SnapBar />
      </div>
    </div>
  );
}
